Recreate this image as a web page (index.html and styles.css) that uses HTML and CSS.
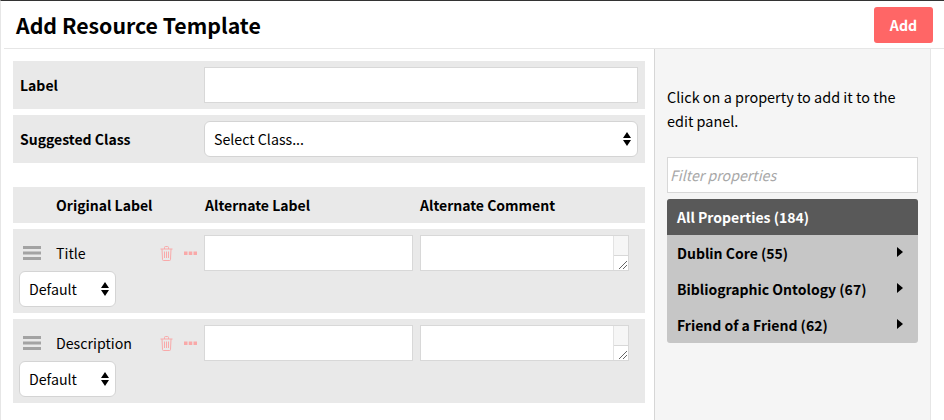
FILE: index.html
```html
<!DOCTYPE html>
<html>
<head>
  <title>Add Resource Template</title>
  <link rel="stylesheet" href="styles.css">
</head>
<body>
  <div class="page">
    <div class="header">
      <h1 class="heading">Add Resource Template</h1>
      <button class="add-button">Add</button>
    </div>
    <div class="content">
      <div class="main">
        <div class="row field-row">
          <label class="field-label">Label</label>
          <input class="text-input wide-input" type="text">
        </div>
        <div class="row field-row">
          <label class="field-label">Suggested Class</label>
          <select class="select-box wide-input"><option>Select Class...</option></select>
        </div>

        <div class="row column-row">
          <div class="col-original">Original Label</div>
          <div class="col-alternate">Alternate Label</div>
          <div>Alternate Comment</div>
        </div>

        <div class="row property-row">
          <div class="property-top">
            <svg class="drag-icon" width="18" height="14" viewBox="0 0 18 14"><path d="M0 0h18v3H0zM0 5.500h18v3H0zM0 11h18v3H0z" fill="#a3a3a3"/></svg>
            <span class="property-name">Title</span>
            <svg class="trash-icon" width="13" height="15" viewBox="0 0 13 15"><path d="M.5 3h12M2 3l.5 10.500q0 1 1 1h6q1 0 1-1L11 3M4.500 3V1.500q0-1 1-1h2q1 0 1 1V3M4.500 5.500v6.500M6.500 5.500v6.500M8.500 5.500v6.500" fill="none" stroke="#f9a9a9" stroke-width="1"/></svg>
            <svg class="more-icon" width="13" height="5" viewBox="0 0 13 5"><path d="M0 .500h3.500v3.500H0zM4.750 .500h3.500v3.500h-3.500zM9.500 .500H13v3.500H9.500z" fill="#f9a9a9"/></svg>
            <input class="text-input alt-input" type="text">
            <div class="comment-box">
              <textarea class="comment-text"></textarea>
              <div class="scroll-bar">
                <div class="scroll-track"></div>
                <div class="scroll-corner">
                  <svg width="8" height="8" viewBox="0 0 8 8"><path d="M0 8l8-8M4 8l4-4" stroke="#666" stroke-width="1" fill="none"/></svg>
                </div>
              </div>
            </div>
          </div>
          <select class="select-box small-select"><option>Default</option></select>
        </div>

        <div class="row property-row">
          <div class="property-top">
            <svg class="drag-icon" width="18" height="14" viewBox="0 0 18 14"><path d="M0 0h18v3H0zM0 5.500h18v3H0zM0 11h18v3H0z" fill="#a3a3a3"/></svg>
            <span class="property-name">Description</span>
            <svg class="trash-icon" width="13" height="15" viewBox="0 0 13 15"><path d="M.5 3h12M2 3l.5 10.500q0 1 1 1h6q1 0 1-1L11 3M4.500 3V1.500q0-1 1-1h2q1 0 1 1V3M4.500 5.500v6.500M6.500 5.500v6.500M8.500 5.500v6.500" fill="none" stroke="#f9a9a9" stroke-width="1"/></svg>
            <svg class="more-icon" width="13" height="5" viewBox="0 0 13 5"><path d="M0 .500h3.500v3.500H0zM4.750 .500h3.500v3.500h-3.500zM9.500 .500H13v3.500H9.500z" fill="#f9a9a9"/></svg>
            <input class="text-input alt-input" type="text">
            <div class="comment-box">
              <textarea class="comment-text"></textarea>
              <div class="scroll-bar">
                <div class="scroll-track"></div>
                <div class="scroll-corner">
                  <svg width="8" height="8" viewBox="0 0 8 8"><path d="M0 8l8-8M4 8l4-4" stroke="#666" stroke-width="1" fill="none"/></svg>
                </div>
              </div>
            </div>
          </div>
          <select class="select-box small-select"><option>Default</option></select>
        </div>
      </div>

      <div class="sidebar">
        <p class="hint">Click on a property to add it to the edit panel.</p>
        <input class="text-input filter-input" type="text" placeholder="Filter properties">
        <div class="property-list">
          <div class="list-item active">All Properties (184)</div>
          <div class="list-item">Dublin Core (55)<span class="arrow"></span></div>
          <div class="list-item">Bibliographic Ontology (67)<span class="arrow"></span></div>
          <div class="list-item">Friend of a Friend (62)<span class="arrow"></span></div>
        </div>
      </div>
    </div>
  </div>
</body>
</html>
```

FILE: styles.css
```css
* {
  box-sizing: border-box;
}

body {
  margin: 0;
  font-family: "Noto Sans CJK SC", "Noto Sans", sans-serif;
  font-size: 14.2px;
  line-height: 24px;
  color: #000;
  background: #fff;
}

.page {
  height: 420px;
  overflow: hidden;
  border-top: 1px solid #333;
  border-left: 1px solid #e6e6e6;
  padding-left: 3px;
  display: flex;
  flex-direction: column;
}

.header {
  height: 48px;
  flex: none;
  display: flex;
  justify-content: space-between;
  align-items: center;
  padding: 0 11px 0 12px;
  border-bottom: 1px solid #e6e6e6;
}

.heading {
  margin: 0;
  font-size: 21.3px;
  font-weight: 600;
}

.add-button {
  width: 59px;
  height: 36px;
  border: 0;
  border-radius: 3px;
  background: #ff6666;
  color: #fff;
  font-family: inherit;
  font-size: 14.2px;
  font-weight: 600;
}

.content {
  flex: 1;
  display: flex;
}

.main {
  width: 650px;
  padding: 12px 9px 0;
}

.row {
  background: #e9e9e9;
  margin-bottom: 6px;
}

.field-row {
  height: 48px;
  display: flex;
  align-items: center;
  padding: 0 7px 0 6px;
  font-size: 14px;
  font-weight: 600;
}

.field-label {
  width: 185px;
  padding-left: 1px;
}

.text-input {
  height: 36px;
  border: 1px solid #d8d8d8;
  background: #fff;
  font-family: inherit;
  font-size: 14.2px;
  outline: none;
}

.wide-input {
  flex: 1;
}

.select-box {
  appearance: none;
  height: 36px;
  padding: 0 9px;
  border: 1px solid #d4d4d4;
  border-radius: 6px;
  font-family: inherit;
  font-size: 14.2px;
  color: #000;
  background: #fff url("data:image/svg+xml,%3Csvg xmlns='http://www.w3.org/2000/svg' width='8' height='14'%3E%3Cpath d='M4 0l4 6H0zM4 14l4-6H0z'/%3E%3C/svg%3E") no-repeat right 6px center;
}

.column-row {
  height: 36px;
  margin-top: 24px;
  display: flex;
  align-items: center;
  font-size: 14px;
  font-weight: 600;
}

.col-original {
  width: 191px;
  padding-left: 43px;
}

.col-alternate {
  width: 216px;
  padding-left: 1px;
}

.property-row {
  height: 84px;
  padding: 6px;
}

.property-top {
  display: flex;
  align-items: center;
  height: 36px;
}

.drag-icon {
  margin-left: 4px;
  flex: none;
}

.property-name {
  width: 104px;
  margin-left: 15px;
}

.trash-icon {
  flex: none;
}

.more-icon {
  flex: none;
  margin-left: 11px;
  margin-right: 7px;
}

.alt-input {
  width: 209px;
  flex: none;
}

.comment-box {
  width: 209px;
  height: 36px;
  margin-left: 7px;
  display: flex;
  border: 1px solid #d8d8d8;
  background: #fff;
}

.comment-text {
  flex: 1;
  min-width: 0;
  border: 0;
  padding: 0;
  outline: none;
  resize: none;
}

.scroll-bar {
  width: 15px;
  flex: none;
  display: flex;
  flex-direction: column;
  border-left: 1px solid #e3e3e3;
}

.scroll-track {
  flex: 1;
  background: #f6f6f6;
}

.scroll-corner {
  height: 15px;
  display: flex;
  justify-content: flex-end;
  align-items: flex-end;
  padding: 0 1px 1px 0;
  border-top: 1px solid #d8d8d8;
  background: #fff;
}

.scroll-corner svg {
  display: block;
}

.small-select {
  width: 97px;
  display: block;
}

.sidebar {
  width: 277px;
  flex: none;
  background: #f5f5f5;
  border-left: 1px solid #d6d6d6;
  border-right: 1px solid #e6e6e6;
  padding: 36px 12px 0;
}

.hint {
  margin: 0 0 24px;
  font-size: 14.45px;
}

.filter-input {
  display: block;
  width: 251px;
  padding: 0 2px;
  margin-bottom: 6px;
}

.filter-input::placeholder {
  color: #a8a8a8;
  font-style: italic;
  font-weight: 400;
  opacity: 1;
}

.property-list {
  width: 251px;
  border-radius: 3px;
  overflow: hidden;
  background: #c6c6c6;
  font-size: 14px;
}

.list-item {
  height: 36px;
  display: flex;
  align-items: center;
  justify-content: space-between;
  padding: 0 15px 0 10px;
  font-weight: 600;
}

.active {
  background: #595959;
  color: #fff;
}

.arrow {
  width: 0;
  height: 0;
  border-left: 6px solid #000;
  border-top: 5px solid transparent;
  border-bottom: 5px solid transparent;
  margin-top: -3px;
}
```
